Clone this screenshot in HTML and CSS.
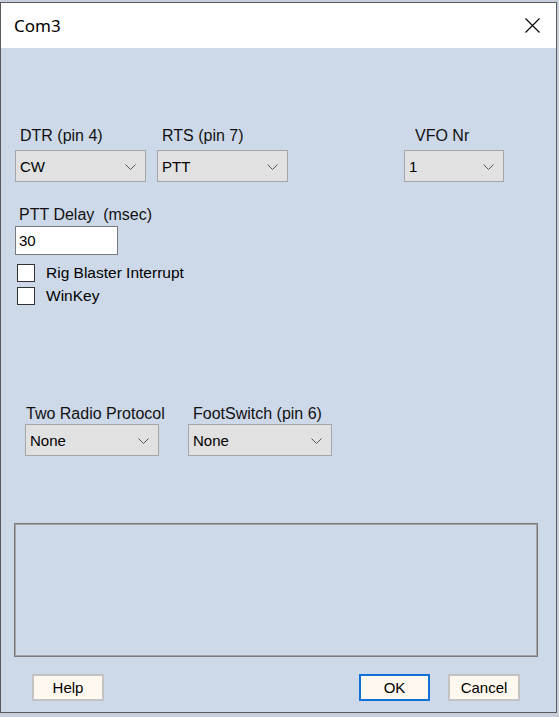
FILE: index.html
```html
<!DOCTYPE html>
<html lang="en">
<head>
    <meta charset="UTF-8" />
    <title>Com3</title>
    <link rel="stylesheet" href="styles.css">
</head>
<body>
<div class="window">
    <div class="titlebar">
        <span class="title">Com3</span>
        <span class="close">
            <svg width="15" height="15" viewBox="0 0 15 15"><path d="M0.5 0.5 L14.5 14.5 M14.5 0.5 L0.5 14.5" stroke="#000" stroke-width="1.1" fill="none"/></svg>
        </span>
    </div>

    <div class="content">
        <!-- Port lines -->
        <div class="row row-ports">
            <div class="field field-dtr">
                <div class="label">DTR (pin 4)</div>
                <div class="combo"><span>CW</span><svg class="chev" width="11" height="6" viewBox="0 0 11 6"><path d="M0.5 0.5 L5.5 5.5 L10.5 0.5" stroke="#555" fill="none"/></svg></div>
            </div>
            <div class="field field-rts">
                <div class="label">RTS (pin 7)</div>
                <div class="combo"><span>PTT</span><svg class="chev" width="11" height="6" viewBox="0 0 11 6"><path d="M0.5 0.5 L5.5 5.5 L10.5 0.5" stroke="#555" fill="none"/></svg></div>
            </div>
            <div class="field field-vfo">
                <div class="label">VFO Nr</div>
                <div class="combo"><span>1</span><svg class="chev" width="11" height="6" viewBox="0 0 11 6"><path d="M0.5 0.5 L5.5 5.5 L10.5 0.5" stroke="#555" fill="none"/></svg></div>
            </div>
        </div>

        <!-- PTT delay -->
        <div class="ptt">
            <div class="label">PTT Delay&nbsp; (msec)</div>
            <div class="textbox">30</div>
        </div>

        <div class="checks">
            <div class="check"><span class="box"></span><span>Rig Blaster Interrupt</span></div>
            <div class="check"><span class="box"></span><span>WinKey</span></div>
        </div>

        <!-- Two radio / footswitch -->
        <div class="row row-bottom">
            <div class="field field-so2r">
                <div class="label">Two Radio Protocol</div>
                <div class="combo"><span>None</span><svg class="chev" width="11" height="6" viewBox="0 0 11 6"><path d="M0.5 0.5 L5.5 5.5 L10.5 0.5" stroke="#555" fill="none"/></svg></div>
            </div>
            <div class="field field-foot">
                <div class="label">FootSwitch (pin 6)</div>
                <div class="combo"><span>None</span><svg class="chev" width="11" height="6" viewBox="0 0 11 6"><path d="M0.5 0.5 L5.5 5.5 L10.5 0.5" stroke="#555" fill="none"/></svg></div>
            </div>
        </div>

        <div class="panel"></div>

        <div class="buttons">
            <div class="btn btn-help">Help</div>
            <div class="btn btn-ok">OK</div>
            <div class="btn btn-cancel">Cancel</div>
        </div>
    </div>
</div>
</body>
</html>
```

FILE: styles.css
```css
body {
    margin: 0;
    height: 717px;
    overflow: hidden;
    background: #c6cfdb;
    font-family: "Liberation Sans", Arial, sans-serif;
    font-size: 15px;
    color: #000;
}

.window {
    margin-top: 2px;
    width: 555px;
    height: 709px;
    border: 1px solid #5b5b5b;
    background: #cdd9e9;
    display: flex;
    flex-direction: column;
}

.titlebar {
    height: 45px;
    background: #fff;
    display: flex;
    align-items: center;
    justify-content: space-between;
    padding-left: 13px;
}

.title {
    font-family: "Noto Sans", "Open Sans", sans-serif;
    font-size: 17px;
}

.close {
    display: flex;
    margin-right: 16px;
}

.content {
    display: flex;
    flex-direction: column;
}

.label {
    font-size: 16px;
    line-height: 17px;
    white-space: nowrap;
    color: #111;
}

.row {
    display: flex;
}

.row-ports {
    margin-top: 79px;
    padding-left: 14px;
}

.combo {
    height: 30px;
    margin-top: 6px;
    background: #e1e1e1;
    border: 1px solid #a6a6a6;
    display: flex;
    align-items: center;
    justify-content: space-between;
    padding: 0 9px 0 4px;
}

.combo .chev {
    margin-top: 1px;
}

.field-dtr { width: 131px; }
.field-dtr .label { padding-left: 5px; }

.field-rts { width: 131px; margin-left: 11px; }
.field-rts .label { padding-left: 5px; }

.field-vfo { width: 100px; margin-left: 116px; }
.field-vfo .label { padding-left: 11px; }

.ptt {
    margin-top: 24px;
    padding-left: 14px;
}

.ptt .label {
    padding-left: 4px;
}

.textbox {
    width: 98px;
    height: 27px;
    margin-top: 3px;
    background: #fff;
    border: 1px solid #7a7a7a;
    padding-left: 3px;
    line-height: 27px;
}

.checks {
    margin-top: 6px;
    padding-left: 16px;
}

.check {
    height: 23px;
    display: flex;
    align-items: center;
    font-size: 15.5px;
}

.check .box {
    width: 16px;
    height: 16px;
    background: #fff;
    border: 1px solid #333;
    margin-right: 11px;
}

.row-bottom {
    margin-top: 98px;
    padding-left: 24px;
}

.row-bottom .combo {
    margin-top: 2px;
}

.field-so2r { width: 134px; }
.field-so2r .label { padding-left: 1px; }

.field-foot { width: 144px; margin-left: 29px; }
.field-foot .label { padding-left: 5px; }

.panel {
    width: 522px;
    height: 132px;
    margin: 67px 0 0 13px;
    border: 1px solid #7b7b7b;
    box-shadow: inset 1px 1px 0 #a4a4a4, inset -1px -1px 0 #a4a4a4;
}

.buttons {
    display: flex;
    margin-top: 17px;
    padding-left: 31px;
}

.btn {
    width: 68px;
    height: 23px;
    background: #fef8ee;
    border: 2px solid #c2c2c2;
    text-align: center;
    line-height: 24px;
}

.btn-ok {
    width: 67px;
    margin-left: 255px;
    border-color: #0f70d6;
}

.btn-cancel {
    margin-left: 18px;
}
```
